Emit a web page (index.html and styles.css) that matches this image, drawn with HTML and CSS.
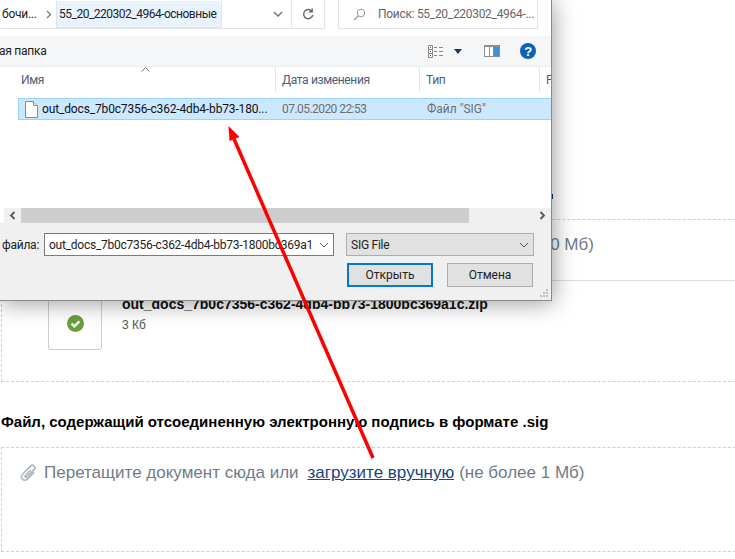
FILE: index.html
```html
<!DOCTYPE html>
<html lang="en">
<head>
    <meta charset="UTF-8">
    <meta name="viewport" content="width=device-width, initial-scale=1.0">
    <title>Загрузка документов</title>
    <link rel="stylesheet" href="styles.css">
</head>
<body>
    <main class="page">
        <section class="dropzone dropzone-first">
            <div class="drop-row drop-row-first">
                <svg class="clip-icon" width="17" height="18" viewBox="0 0 17 18">
                    <path transform="translate(8.500 9) rotate(45) scale(1.150) translate(-8.500 -9)" d="M11.500 5v8.500a3 3 0 0 1-6 0V3.500a2.200 2.200 0 0 1 4.400 0v9a.9.9 0 0 1-1.800 0V6" fill="none" stroke="#aeb6bc" stroke-width="1.400"/>
                </svg>
                <span class="drop-text">Перетащите документ сюда или</span>
                <a class="upload-link" href="#">загрузите вручную</a>
                <span class="drop-text">(не более 10 Мб)</span>
            </div>
            <div class="file-item">
                <div class="file-thumb">
                    <svg width="17" height="17" viewBox="0 0 17 17">
                        <circle cx="8.500" cy="8.500" r="8.500" fill="#6a9f3c"/>
                        <path d="M4.600 8.600l2.800 2.700 5-5" fill="none" stroke="#fff" stroke-width="2.400"/>
                    </svg>
                </div>
                <div class="file-info">
                    <div class="file-name">out_docs_7b0c7356-c362-4db4-bb73-1800bc369a1c.zip</div>
                    <div class="file-size">3 Кб</div>
                </div>
            </div>
        </section>

        <h2 class="section-title">Файл, содержащий отсоединенную электронную подпись в формате .sig</h2>

        <section class="dropzone">
            <div class="drop-row">
                <svg class="clip-icon" width="17" height="18" viewBox="0 0 17 18">
                    <path transform="translate(8.500 9) rotate(45) scale(1.150) translate(-8.500 -9)" d="M11.500 5v8.500a3 3 0 0 1-6 0V3.500a2.200 2.200 0 0 1 4.400 0v9a.9.9 0 0 1-1.800 0V6" fill="none" stroke="#aeb6bc" stroke-width="1.400"/>
                </svg>
                <span class="drop-text">Перетащите документ сюда или</span>
                <a class="upload-link" href="#">загрузите вручную</a>
                <span class="drop-text">(не более 1 Мб)</span>
            </div>
        </section>
    </main>

    <!-- bit of page text that sticks out past the dialog edge -->
    <div class="behind-mark"></div>

    <!-- Open file dialog, cut off by the top and left of the screen -->
    <div class="dialog">
        <div class="address-row">
            <div class="address-box">
                <span class="crumb-cut">бочи...</span>
                <svg class="crumb-arrow" width="6" height="9" viewBox="0 0 6 9"><path d="M1 1l3.500 3.500L1 8" fill="none" stroke="#777" stroke-width="1.300"/></svg>
                <span class="crumb-current">55_20_220302_4964-основные</span>
                <svg class="crumb-down" width="10" height="6" viewBox="0 0 10 6"><path d="M1 1l4 4 4-4" fill="none" stroke="#777" stroke-width="1.500"/></svg>
            </div>
            <div class="refresh-box">
                <svg width="12" height="13" viewBox="0 0 12 13"><path d="M9.800 3.200A4.600 4.600 0 1 0 10.800 7M10.200 .6v3.200H7" fill="none" stroke="#666" stroke-width="1.400"/></svg>
            </div>
            <div class="search-box">
                <svg width="13" height="13" viewBox="0 0 13 13"><circle cx="8" cy="5" r="3.800" fill="none" stroke="#999"/><path d="M5.200 7.800L1 12" stroke="#b58a70" stroke-width="1.200"/></svg>
                <span>Поиск: 55_20_220302_4964-...</span>
            </div>
        </div>

        <div class="toolbar">
            <span class="new-folder">ая папка</span>
            <div class="toolbar-icons">
                <svg width="16" height="13" viewBox="0 0 16 13">
                    <path d="M.5.500h4v12h-4zM.500 4.500h4M.500 8.500h4" fill="#fff" stroke="#888"/>
                    <path d="M6 2.500h3M11 2.500h4M6 6.500h3M11 6.500h4M6 10.500h3M11 10.500h4" stroke="#888"/>
                    <path d="M2 2h1v1H2zM2 6h1v1H2z" fill="#456"/><path d="M2 10h1v1H2z" fill="#c33"/>
                </svg>
                <svg class="view-arrow" width="8" height="5" viewBox="0 0 8 5"><path d="M0 0h8L4 5z" fill="#1c3a5e"/></svg>
                <svg class="pane-icon" width="16" height="12" viewBox="0 0 16 12">
                    <rect width="16" height="12" fill="#8e8e8e"/>
                    <rect x="1" y="2" width="4" height="9" fill="#fff"/><rect x="6" y="2" width="3" height="9" fill="#fff"/>
                    <rect x="10" y="2" width="5" height="9" fill="#3d8fe0"/>
                </svg>
                <svg class="help-icon" width="16" height="16" viewBox="0 0 16 16">
                    <circle cx="8" cy="8" r="8" fill="#0f62ae"/>
                    <text x="8" y="12.500" text-anchor="middle" class="help-mark">?</text>
                </svg>
            </div>
        </div>

        <div class="columns">
            <svg class="sort-arrow" width="9" height="5" viewBox="0 0 9 5"><path d="M.5 4.500l4-4 4 4" fill="none" stroke="#777"/></svg>
            <div class="col col-name">Имя</div>
            <div class="col col-date">Дата изменения</div>
            <div class="col col-type">Тип</div>
            <div class="col col-size">Р</div>
        </div>

        <div class="file-list">
            <div class="file-row">
                <svg class="doc-icon" width="13" height="17" viewBox="0 0 13 17"><path d="M.5.500h8l4 4v12H.500z" fill="#fff" stroke="#8c8c8c"/><path d="M8.500.500v4h4" fill="#eee" stroke="#8c8c8c"/></svg>
                <span class="row-name">out_docs_7b0c7356-c362-4db4-bb73-180...</span>
                <span class="row-date">07.05.2020 22:53</span>
                <span class="row-type">Файл "SIG"</span>
            </div>
        </div>

        <div class="hscroll">
            <span class="scroll-btn"><svg width="7" height="9" viewBox="0 0 7 9"><path d="M5.500 1L2 4.500 5.500 8" fill="none" stroke="#555" stroke-width="1.800"/></svg></span>
            <div class="scroll-track"><div class="scroll-thumb"></div></div>
            <span class="scroll-btn"><svg width="7" height="9" viewBox="0 0 7 9"><path d="M1.500 1L5 4.500 1.500 8" fill="none" stroke="#555" stroke-width="1.800"/></svg></span>
        </div>

        <div class="bottom-panel">
            <div class="name-row">
                <label class="name-label">файла:</label>
                <div class="name-input">
                    <span>out_docs_7b0c7356-c362-4db4-bb73-1800bc369a1</span>
                    <svg width="10" height="6" viewBox="0 0 10 6"><path d="M1 1l4 4 4-4" fill="none" stroke="#555"/></svg>
                </div>
                <div class="type-select">
                    <span>SIG File</span>
                    <svg width="10" height="6" viewBox="0 0 10 6"><path d="M1 1l4 4 4-4" fill="none" stroke="#555"/></svg>
                </div>
            </div>
            <div class="button-row">
                <button class="btn btn-default">Открыть</button>
                <button class="btn">Отмена</button>
            </div>
            <svg class="grip" width="9" height="9" viewBox="0 0 9 9"><path d="M6 0h2v2H6zM3 3h2v2H3zM6 3h2v2H6zM0 6h2v2H0zM3 6h2v2H3zM6 6h2v2H6z" fill="#bdbdbd"/></svg>
        </div>
    </div>

    <!-- Red annotation arrow drawn over the screenshot -->
    <svg class="annotation" width="735" height="559" viewBox="0 0 735 559">
        <path d="M373 458L234 139" stroke="#fe0000" stroke-width="3.500" fill="none"/>
        <path d="M228.500 126L239.500 137L229.500 141z" fill="#fe0000"/>
    </svg>
</body>
</html>
```

FILE: styles.css
```css
html, body {
    margin: 0;
    padding: 0;
    height: 100%;
    overflow: hidden;
    background-color: #fff;
}
body {
    font-family: "Liberation Sans", Arial, sans-serif;
    position: relative;
    width: 735px;
    height: 559px;
}

/* page behind the dialog */
.page {
    padding: 219px 0 0 1px;
    width: 790px;
}
.dropzone {
    border: 1px dashed #cfcfcf;
    height: 103px;
}
.dropzone-first {
    height: 163px;
    box-sizing: border-box;
}
.drop-row {
    display: flex;
    align-items: flex-start;
    font-size: 17px;
    line-height: 20px;
    padding: 15px 0 0 18px;
}
.drop-row-first {
    height: 61px;
    box-sizing: border-box;
    border-bottom: 1px solid #dedede;
}
.drop-text {
    color: #6f7b8a;
    white-space: nowrap;
}
.clip-icon {
    flex: none;
    margin: 1px 7px 0 0;
}
.upload-link {
    color: #17457f;
    margin: 0 5px 0 9px;
    white-space: nowrap;
}
.file-item {
    display: flex;
    margin: 15px 0 0 46px;
}
.file-thumb {
    width: 54px;
    height: 54px;
    box-sizing: border-box;
    border: 1px solid #ccc;
    border-radius: 3px;
    display: flex;
    align-items: center;
    justify-content: center;
}
.file-info {
    margin-left: 20px;
}
.file-name {
    font-size: 14px;
    font-weight: bold;
    color: #111;
    line-height: 16px;
    white-space: nowrap;
}
.file-size {
    font-size: 12px;
    color: #555;
    margin-top: 6px;
}
.section-title {
    font-size: 15px;
    font-weight: bold;
    color: #000;
    line-height: 18px;
    margin: 31px 0 16px 0;
    white-space: nowrap;
}
.behind-mark {
    position: absolute;
    left: 551px;
    top: 194px;
    width: 2px;
    height: 5px;
    background: #00356f;
}

/* file dialog */
.dialog {
    position: absolute;
    left: 0;
    top: 0;
    width: 551px;
    height: 300px;
    background: #fff;
    border-right: 1px solid #8a8a8a;
    border-bottom: 1px solid #8a8a8a;
    box-shadow: 1px 2px 22px rgba(0, 0, 0, 0.4);
    font-family: Roboto, "Noto Sans", sans-serif;
    font-size: 12px;
    letter-spacing: -0.25px;
    color: #222;
    display: flex;
    flex-direction: column;
}
.dialog svg {
    flex: none;
}
.address-row {
    display: flex;
    height: 29px;
    box-sizing: border-box;
    padding-right: 13px;
}
.address-box {
    flex: none;
    width: 292px;
    box-sizing: border-box;
    display: flex;
    align-items: center;
    border: 1px solid #e2e2e2;
    border-top: none;
    border-left: none;
}
.crumb-cut {
    margin-left: 2px;
    width: 44px;
    white-space: nowrap;
}
.crumb-arrow {
    margin-right: 3px;
}
.crumb-current {
    background: #e8f3fd;
    border: 1px solid #d6e9fa;
    border-top: none;
    height: 27px;
    line-height: 27px;
    box-sizing: border-box;
    width: 166px;
    margin-left: 1px;
    padding-left: 2px;
    letter-spacing: -0.5px;
    white-space: nowrap;
}
.crumb-down {
    margin-left: 51px;
}
.refresh-box {
    flex: none;
    width: 33px;
    box-sizing: border-box;
    border: 1px solid #e2e2e2;
    border-top: none;
    border-left: none;
    display: flex;
    align-items: center;
    justify-content: center;
}
.search-box {
    margin-left: 13px;
    flex: 1;
    min-width: 0;
    box-sizing: border-box;
    border: 1px solid #e2e2e2;
    border-top: none;
    display: flex;
    align-items: center;
    padding-left: 14px;
    gap: 12px;
    color: #666;
    letter-spacing: -0.3px;
    white-space: nowrap;
}
.toolbar {
    margin-top: 7px;
    height: 30px;
    background: #f5f6f7;
    display: flex;
    align-items: center;
    justify-content: space-between;
    border-bottom: 1px solid #eceef0;
}
.new-folder {
    margin-left: -1px;
}
.toolbar-icons {
    display: flex;
    align-items: center;
    padding-right: 15px;
}
.view-arrow {
    margin-left: 10px;
}
.pane-icon {
    margin-left: 22px;
}
.help-icon {
    margin-left: 20px;
}
.help-mark {
    font-family: "Liberation Sans", sans-serif;
    font-size: 13px;
    font-weight: bold;
    fill: #fff;
}
.columns {
    position: relative;
    display: flex;
    height: 25px;
    color: #4c607a;
    line-height: 26px;
    letter-spacing: -0.35px;
}
.sort-arrow {
    position: absolute;
    left: 141px;
    top: 0;
}
.col {
    box-sizing: border-box;
    padding-left: 6px;
    border-right: 1px solid #e5e5e5;
}
.col-name {
    width: 276px;
    padding-left: 21px;
}
.col-date {
    width: 144px;
}
.col-type {
    width: 120px;
}
.col-size {
    border-right: none;
    overflow: hidden;
    width: 11px;
}
.file-list {
    flex: none;
    height: 116px;
    padding: 6px 0 0 18px;
    box-sizing: border-box;
}
.file-row {
    display: flex;
    align-items: center;
    height: 22px;
    box-sizing: border-box;
    background: #cce8ff;
    border: 1px solid #99d1ff;
    border-right: none;
    white-space: nowrap;
}
.doc-icon {
    margin-left: 6px;
}
.row-name {
    margin-left: 4px;
    width: 240px;
    letter-spacing: -0.15px;
    color: #111;
}
.row-date {
    width: 145px;
    letter-spacing: -0.55px;
    color: #6d6d6d;
}
.row-type {
    letter-spacing: 0;
    color: #6d6d6d;
}
.hscroll {
    display: flex;
    height: 15px;
    padding-left: 4px;
    align-items: stretch;
}
.scroll-btn {
    width: 17px;
    background: #f0f0f0;
    display: flex;
    align-items: center;
    justify-content: center;
}
.scroll-track {
    flex: 1;
    background: #f0f0f0;
}
.scroll-thumb {
    width: 448px;
    height: 100%;
    background: #cdcdcd;
}
.bottom-panel {
    position: relative;
    flex: 1;
    background: #f0f0f0;
    padding-top: 10px;
}
.name-row {
    display: flex;
    align-items: center;
}
.name-label {
    margin-left: 2px;
    width: 42px;
}
.name-input, .type-select {
    flex: none;
    height: 23px;
    box-sizing: border-box;
    display: flex;
    align-items: center;
    justify-content: space-between;
    white-space: nowrap;
}
.name-input {
    width: 290px;
    background: #fff;
    border: 1px solid #7a7a7a;
    padding: 0 4px;
}
.type-select {
    width: 188px;
    margin-left: 12px;
    background: #e1e1e1;
    border: 1px solid #adadad;
    padding: 0 4px;
}
.button-row {
    display: flex;
    margin: 7px 0 0 347px;
    gap: 14px;
}
.btn {
    width: 86px;
    height: 24px;
    box-sizing: border-box;
    background: #e1e1e1;
    border: 1px solid #adadad;
    font-family: Roboto, "Noto Sans", sans-serif;
    font-size: 12px;
    color: #222;
    padding: 0;
}
.btn-default {
    border: 2px solid #0078d7;
}
.grip {
    position: absolute;
    right: 2px;
    bottom: 2px;
}
.annotation {
    position: absolute;
    left: 0;
    top: 0;
    pointer-events: none;
}
```
